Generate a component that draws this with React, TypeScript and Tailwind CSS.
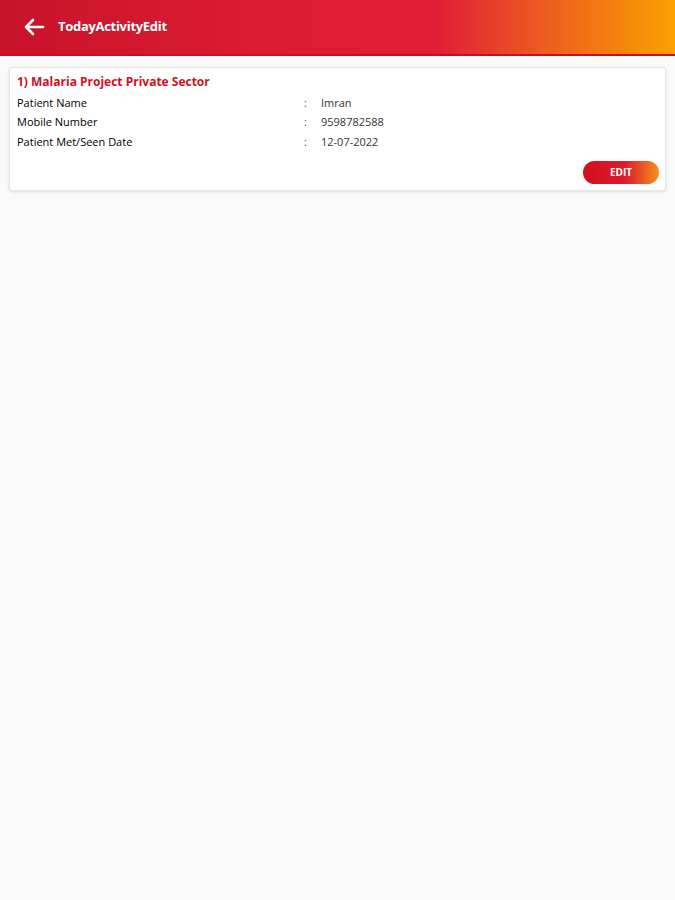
import React from "react";

export default function App() {
  const rows = [
    ["Patient Name", "Imran"],
    ["Mobile Number", "9598782588"],
    ["Patient Met/Seen Date", "12-07-2022"],
  ];
  return (
    <div className="min-h-[900px] w-[675px] bg-[#fafafa]" style={{ fontFamily: '"Open Sans", "Noto Sans", sans-serif' }}>
      <div className="flex h-[56px] items-center border-b-2 border-[#c80f22] bg-[linear-gradient(90deg,#c8132a_0%,#dc1c33_40%,#e11f36_65%,#ec5a22_80%,#fba100_100%)] pl-[23px]">
        <svg width="22" height="18" viewBox="0 0 22 18" fill="none" stroke="white" strokeWidth="2.6" strokeLinecap="round" strokeLinejoin="round">
          <path d="M20 9H3M10 2L3 9l7 7" />
        </svg>
        <span className="ml-[13px] text-[13px] font-bold tracking-[-0.3px] text-white">TodayActivityEdit</span>
      </div>
      <div className="px-[9px] pt-[11px]">
        <div className="rounded-[3px] border border-[#e6e6e6] bg-white pl-[7px] pr-[6px] pt-[5px] pb-[6px] shadow-[0_1px_3px_rgba(0,0,0,0.12)]">
          <div className="text-[12px] font-bold leading-[18px] text-[#d0101f]">1) Malaria Project Private Sector</div>
          <div className="mt-[2px] flex flex-col">
            {rows.map(([k, v]) => (
              <div key={k} className="flex h-[19.5px] items-center text-[11px] text-black">
                <span className="w-[287px]">{k}</span>
                <span className="w-[17px] text-[#555]">:</span>
                <span className="text-[#333]">{v}</span>
              </div>
            ))}
          </div>
          <div className="mt-[9px] flex justify-end">
            <button className="flex h-[23px] w-[76px] items-center justify-center rounded-full bg-[linear-gradient(90deg,#d3101f_0%,#dc1a2c_55%,#f7901a_100%)] text-[10px] font-bold text-white">
              EDIT
            </button>
          </div>
        </div>
      </div>
    </div>
  );
}
